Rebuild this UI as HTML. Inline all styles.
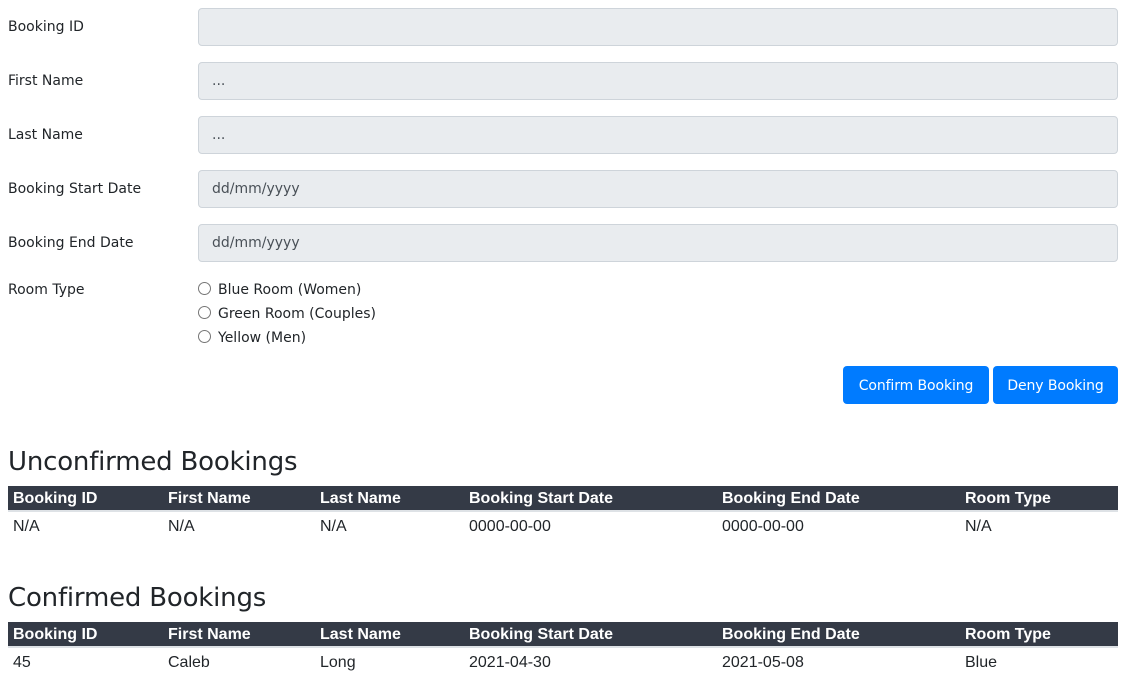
<!DOCTYPE html>
<html><head><style>
body{margin:0;width:1127px;height:680px;overflow:hidden;background:#fff;font-family:"DejaVu Sans","Liberation Sans",sans-serif;color:#212529;position:relative}
.a{position:absolute}
.lbl{left:8px;font-size:14px}
.inp{left:198px;width:918px;height:36px;background:#e9ecef;border:1px solid #ced4da;border-radius:4px;box-sizing:content-box;font-size:14px;color:#495057}
.inp span{position:absolute;left:13px;top:10px}
.rad{left:198px;font-size:14px}
.rad i{display:inline-block;width:11px;height:11px;border:1px solid #767676;border-radius:50%;margin-right:7px;vertical-align:-1px}
.btn{background:#007bff;color:#fff;border-radius:4px;font-size:14px;letter-spacing:-0.1px;height:38px;line-height:40px;text-align:center;top:366px}
h2{position:absolute;left:8px;margin:0;font-weight:500;font-size:26px;letter-spacing:-0.2px;line-height:32px}
table{position:absolute;left:8px;width:1110px;border-collapse:collapse;font-family:"Liberation Sans",Arial,sans-serif;font-size:16px}
th{background:#343a46;color:#fff;text-align:left;font-weight:bold;padding:2px 5px 0;height:22px;border-bottom:2px solid #dee2e6}
td{padding:2px 5px 0;height:26px}
</style></head><body>
<div class="a lbl" style="top:19px">Booking ID</div>
<div class="a inp" style="top:8px"></div>
<div class="a lbl" style="top:73px">First Name</div>
<div class="a inp" style="top:62px"><span>...</span></div>
<div class="a lbl" style="top:127px">Last Name</div>
<div class="a inp" style="top:116px"><span>...</span></div>
<div class="a lbl" style="top:181px">Booking Start Date</div>
<div class="a inp" style="top:170px"><span>dd/mm/yyyy</span></div>
<div class="a lbl" style="top:235px">Booking End Date</div>
<div class="a inp" style="top:224px"><span>dd/mm/yyyy</span></div>
<div class="a lbl" style="top:282px">Room Type</div>
<div class="a rad" style="top:282px"><i></i>Blue Room (Women)</div>
<div class="a rad" style="top:306px"><i></i>Green Room (Couples)</div>
<div class="a rad" style="top:330px"><i></i>Yellow (Men)</div>
<div class="a btn" style="left:843px;width:146px">Confirm Booking</div>
<div class="a btn" style="left:993px;width:125px">Deny Booking</div>
<h2 style="top:446px">Unconfirmed Bookings</h2>
<table style="top:486px">
<colgroup><col style="width:155px"><col style="width:152px"><col style="width:149px"><col style="width:253px"><col style="width:243px"><col></colgroup>
<tr><th>Booking ID</th><th>First Name</th><th>Last Name</th><th>Booking Start Date</th><th>Booking End Date</th><th>Room Type</th></tr>
<tr><td>N/A</td><td>N/A</td><td>N/A</td><td>0000-00-00</td><td>0000-00-00</td><td>N/A</td></tr>
</table>
<h2 style="top:582px">Confirmed Bookings</h2>
<table style="top:622px">
<colgroup><col style="width:155px"><col style="width:152px"><col style="width:149px"><col style="width:253px"><col style="width:243px"><col></colgroup>
<tr><th>Booking ID</th><th>First Name</th><th>Last Name</th><th>Booking Start Date</th><th>Booking End Date</th><th>Room Type</th></tr>
<tr><td>45</td><td>Caleb</td><td>Long</td><td>2021-04-30</td><td>2021-05-08</td><td>Blue</td></tr>
</table>
</body></html>
